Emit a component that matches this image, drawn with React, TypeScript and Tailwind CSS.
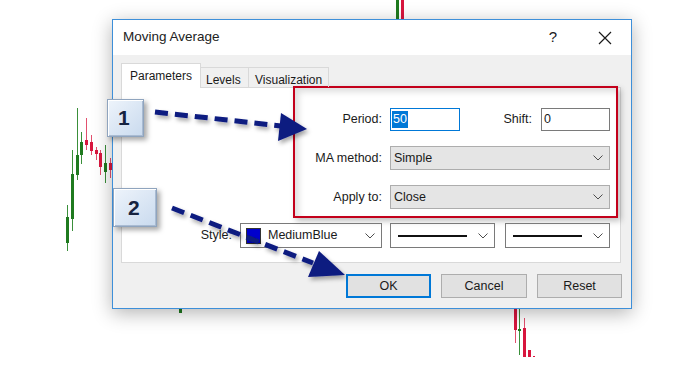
import React from 'react';

type Candle = { x: number; wt: number; wb: number; bt: number; bb: number; up: boolean };

const candles: Candle[] = [
  { x: 67, wt: 205, wb: 251, bt: 217, bb: 243, up: true },
  { x: 72, wt: 150, wb: 231, bt: 174, bb: 219, up: true },
  { x: 77, wt: 108, wb: 180, bt: 155, bb: 175, up: true },
  { x: 81, wt: 132, wb: 164, bt: 142, bb: 155, up: true },
  { x: 86, wt: 118, wb: 150, bt: 140, bb: 145, up: false },
  { x: 91, wt: 135, wb: 155, bt: 142, bb: 151, up: false },
  { x: 96, wt: 147, wb: 160, bt: 150, bb: 154, up: false },
  { x: 100, wt: 150, wb: 175, bt: 153, bb: 167, up: false },
  { x: 105, wt: 145, wb: 183, bt: 163, bb: 172, up: true },
  { x: 110, wt: 158, wb: 178, bt: 163, bb: 170, up: false },
  { x: 397, wt: 0, wb: 20, bt: 0, bb: 20, up: true },
  { x: 402, wt: 0, wb: 20, bt: 0, bb: 20, up: false },
  { x: 515, wt: 300, wb: 343, bt: 300, bb: 330, up: false },
  { x: 519, wt: 300, wb: 355, bt: 329, bb: 331, up: true },
  { x: 524, wt: 318, wb: 357, bt: 328, bb: 357, up: false },
  { x: 529, wt: 350, wb: 357, bt: 350, bb: 357, up: false },
  { x: 180, wt: 304, wb: 313, bt: 304, bb: 313, up: true },
];

function Chart() {
  return (
    <svg className="absolute inset-0" width="700" height="370" viewBox="0 0 700 370">
      {candles.map((c, i) => {
        const body = c.up ? '#1f7a1f' : '#d8163e';
        const wick = c.up ? '#3a8f3a' : '#e2506e';
        return (
          <g key={i}>
            <rect x={c.x} y={c.wt} width={1} height={c.wb - c.wt} fill={wick} />
            <rect x={c.x - 1} y={c.bt} width={3} height={Math.max(c.bb - c.bt, 1)} fill={body} />
          </g>
        );
      })}
      <rect x={533} y={356} width={2} height={1} fill="#d8163e" />
      <rect x={176} y={308} width={1} height={1} fill="#d8163e" />
    </svg>
  );
}

function Chevron() {
  return (
    <svg width="10" height="6" viewBox="0 0 10 6" className="shrink-0">
      <polyline points="0.5,0.5 5,5 9.5,0.5" fill="none" stroke="#4d4d4d" strokeWidth="1" />
    </svg>
  );
}

function Callout({ n, className }: { n: string; className: string }) {
  return (
    <div
      className={`absolute flex items-center border border-[#8fa4be] bg-gradient-to-br from-[#eef4fb] to-[#c9daee] pl-[10px] text-[21px] font-bold text-[#16233f] shadow-[inset_1px_1px_0_#ffffff,inset_-1px_-1px_0_#a9bbd2,3px_3px_5px_rgba(0,0,0,0.35)] ${className}`}
    >
      {n}
    </div>
  );
}

function Arrows() {
  return (
    <svg className="pointer-events-none absolute inset-0" width="700" height="370" viewBox="0 0 700 370">
      <defs>
        <filter id="arrowShadow" x="-20%" y="-20%" width="140%" height="140%">
          <feDropShadow dx="2" dy="3" stdDeviation="2" floodColor="#000000" floodOpacity="0.35" />
        </filter>
      </defs>
      <g filter="url(#arrowShadow)" fill="#0b1a80" stroke="#0b1a80">
        <line x1="155" y1="112" x2="281" y2="126" strokeWidth="5" strokeDasharray="13 7" fill="none" />
        <polygon points="281,113 307,129 278,141" stroke="none" />
        <line x1="172" y1="208" x2="313" y2="263" strokeWidth="5" strokeDasharray="13 7" fill="none" />
        <polygon points="319,251 345,275 308,277" stroke="none" />
      </g>
    </svg>
  );
}

function Dialog() {
  return (
    <div className="flex h-[290px] w-[520px] flex-col border border-[#3d8fd9] bg-[#f0f0f0] text-[#1a1a1a] shadow-[0_4px_18px_rgba(0,0,0,0.3)]">
      <div className="flex h-[35px] items-center justify-between bg-white pl-[10px] pr-[19px]">
        <span className="text-[13.5px] text-[#222]">Moving Average</span>
        <div className="flex items-center gap-[38px]">
          <span className="w-[14px] text-center text-[15px]">?</span>
          <svg width="14" height="14" viewBox="0 0 14 14">
            <path d="M1 1 L13 13 M13 1 L1 13" stroke="#1a1a1a" strokeWidth="1.2" />
          </svg>
        </div>
      </div>

      <div className="px-[8px] pt-[8px]">
        <div className="flex h-[24px] items-end text-[12px]">
          <div className="relative z-10 mb-[-1px] h-[25px] w-[80px] border border-b-0 border-[#d9d9d9] bg-white pl-[8px] pt-[3px]">
            Parameters
          </div>
          <div className="h-[20px] w-[48px] border border-l-0 border-b-0 border-[#d9d9d9] pl-[5px] pt-[3px]">Levels</div>
          <div className="h-[20px] w-[80px] border border-l-0 border-b-0 border-[#d9d9d9] pl-[6px] pt-[3px]">Visualization</div>
        </div>

        <div className="h-[176px] w-[500px] border border-[#d9d9d9] bg-white text-[12.5px]">
          <div className="ml-[171px] mt-[-2px] h-[132px] w-[325px] border-2 border-[#c3001b] bg-white shadow-[3px_3px_6px_rgba(0,0,0,0.25)]">
            <div className="flex h-full flex-col gap-[15px] pt-[20px] shadow-[inset_4px_4px_6px_rgba(0,0,0,0.13)]">
              <div className="flex h-[23px] items-center">
                <span className="w-[87px] text-right">Period:</span>
                <div className="ml-[8px] flex h-[23px] w-[70px] items-center border border-[#0078d7] pl-[1px]">
                  <span className="bg-[#0078d7] px-[1px] leading-[17px] text-white">50</span>
                </div>
                <span className="w-[72px] text-right">Shift:</span>
                <div className="ml-[9px] flex h-[23px] w-[69px] items-center border border-[#7a7a7a] pl-[2px]">0</div>
              </div>
              <div className="flex h-[24px] items-center">
                <span className="w-[87px] text-right">MA method:</span>
                <div className="ml-[8px] flex h-[24px] w-[220px] items-center justify-between border border-[#adadad] bg-[#e5e5e5] pl-[3px] pr-[6px]">
                  <span>Simple</span>
                  <Chevron />
                </div>
              </div>
              <div className="flex h-[24px] items-center">
                <span className="w-[87px] text-right">Apply to:</span>
                <div className="ml-[8px] flex h-[24px] w-[220px] items-center justify-between border border-[#adadad] bg-[#e5e5e5] pl-[3px] pr-[6px]">
                  <span>Close</span>
                  <Chevron />
                </div>
              </div>
            </div>
          </div>

          <div className="mt-[5px] flex h-[25px] items-center">
            <span className="w-[110px] text-right">Style:</span>
            <div className="ml-[8px] flex h-[25px] w-[142px] items-center justify-between border border-[#7a7a7a] pl-[5px] pr-[6px]">
              <div className="flex items-center gap-[7px]">
                <span className="h-[16px] w-[15px] border border-[#333] bg-[#0000cd]" />
                <span>MediumBlue</span>
              </div>
              <Chevron />
            </div>
            <div className="ml-[8px] flex h-[25px] w-[105px] items-center justify-between border border-[#7a7a7a] pl-[7px] pr-[6px]">
              <span className="h-[2px] w-[69px] bg-[#111]" />
              <Chevron />
            </div>
            <div className="ml-[10px] flex h-[25px] w-[105px] items-center justify-between border border-[#7a7a7a] pl-[7px] pr-[6px]">
              <span className="h-[2px] w-[69px] bg-[#111]" />
              <Chevron />
            </div>
          </div>
        </div>

        <div className="mr-[1px] mt-[11px] flex justify-end gap-[10px] text-[12.5px]">
          <button className="h-[24px] w-[85px] border-2 border-[#0078d7] bg-[#e1e1e1]">OK</button>
          <button className="h-[24px] w-[86px] border border-[#adadad] bg-[#e1e1e1]">Cancel</button>
          <button className="h-[24px] w-[85px] border border-[#adadad] bg-[#e1e1e1]">Reset</button>
        </div>
      </div>
    </div>
  );
}

export default function App() {
  return (
    <div className="relative h-[370px] w-[700px] overflow-hidden bg-white font-['Liberation_Sans',Arial,sans-serif]">
      <Chart />
      <div className="relative pl-[112px] pt-[19px]">
        <Dialog />
      </div>
      <Callout n="1" className="left-[107px] top-[99px] h-[38px] w-[37px]" />
      <Callout n="2" className="left-[113px] top-[188px] h-[39px] w-[44px] pl-[14px]" />
      <Arrows />
    </div>
  );
}
